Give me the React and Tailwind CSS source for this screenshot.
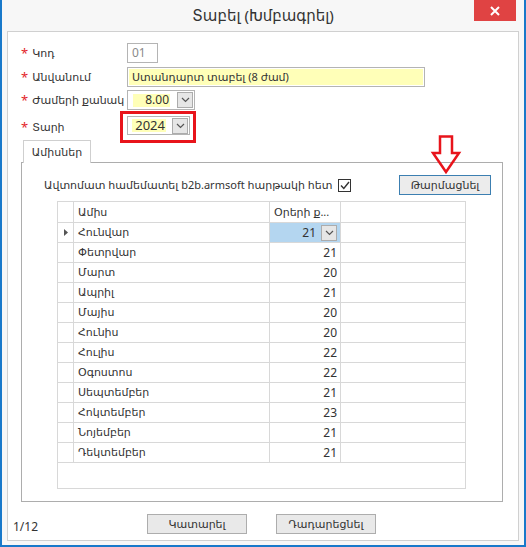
import React from "react";

const months = [
    ["Հունվար", 21],
    ["Փետրվար", 21],
    ["Մարտ", 20],
    ["Ապրիլ", 21],
    ["Մայիս", 20],
    ["Հունիս", 20],
    ["Հուլիս", 22],
    ["Օգոստոս", 22],
    ["Սեպտեմբեր", 21],
    ["Հոկտեմբեր", 23],
    ["Նոյեմբեր", 21],
    ["Դեկտեմբեր", 21],
];

function Chevron() {
    return (
        <svg width="9" height="6" viewBox="0 0 9 6">
            <path d="M1 1 L4.5 4.5 L8 1" fill="none" stroke="#555" strokeWidth="1.2" />
        </svg>
    );
}

function DropBtn() {
    return (
        <div className="flex h-[16px] w-[16px] items-center justify-center border border-[#acacac] bg-[#e6e6e6]">
            <Chevron />
        </div>
    );
}

function Label({ text, w = "w-[106px]" }) {
    return (
        <div className={`${w} flex shrink-0 items-center gap-[4px] whitespace-nowrap`}>
            <span className="text-[13px] leading-none text-[#e3262a]">*</span>
            <span>{text}</span>
        </div>
    );
}

export default function App() {
    return (
        <div className="flex h-[547px] w-[526px] flex-col border-x-2 border-b-2 border-[#1979ca] bg-[#f7f7f7] font-['Noto_Sans','DejaVu_Sans',sans-serif] text-[11px] text-[#333]">
            {/* title bar */}
            <div className="relative flex h-[31px] shrink-0 items-center justify-center">
                <span className="text-[15px] text-[#333]">Տաբել (Խմբագրել)</span>
                <div className="absolute right-[8px] top-0 flex h-[21px] w-[42px] items-center justify-center bg-[#e04343]">
                    <svg width="10" height="10" viewBox="0 0 10 10">
                        <path d="M1 1 L9 9 M9 1 L1 9" stroke="#fff" strokeWidth="2" />
                    </svg>
                </div>
            </div>

            {/* main panel */}
            <div className="relative ml-[5px] flex h-[510px] w-[512px] flex-col border border-[#d0d0d0] bg-white">
                <div className="flex flex-col pl-[13px] pt-[11px]">
                    <div className="flex h-[20px] items-center">
                        <Label text="Կոդ" />
                        <div className="flex h-[20px] w-[31px] items-center border border-[#b4b4b4] pl-[4px] text-[12px] text-[#8a8a8a]">
                            01
                        </div>
                    </div>
                    <div className="mt-[4px] flex h-[20px] items-center">
                        <Label text="Անվանում" />
                        <div className="flex h-[20px] w-[298px] items-center border border-[#b4b4b4] p-px">
                            <div className="flex h-full w-full items-center bg-[#ffffb8] pl-[3px]">
                                Ստանդարտ տաբել (8 ժամ)
                            </div>
                        </div>
                    </div>
                    <div className="mt-[3px] flex h-[20px] items-center">
                        <Label text="Ժամերի քանակ" />
                        <div className="flex h-[20px] w-[68px] items-center border border-[#b4b4b4] pl-[5px] pr-px">
                            <div className="flex h-[13px] w-[37px] items-center justify-end bg-[#ffffb8] pr-[1px] text-[12px]">
                                8.00
                            </div>
                            <div className="ml-auto">
                                <DropBtn />
                            </div>
                        </div>
                    </div>
                    <div className="mt-[1px] flex h-[32px] items-center">
                        <Label text="Տարի" w="w-[99px]" />
                        <div className="h-[32px] w-[76px] border-[3px] border-[#e8141b] pl-[4px] pt-[2px]">
                            <div className="flex h-[19px] w-[63px] items-center border border-[#b4b4b4] pl-[4px] pr-px">
                                <div className="flex h-[13px] w-[34px] items-center justify-end bg-[#ffffb8] pr-[1px] text-[13px]">
                                    2024
                                </div>
                                <div className="ml-auto">
                                    <DropBtn />
                                </div>
                            </div>
                        </div>
                    </div>
                </div>

                {/* tab */}
                <div className="relative ml-[13px] mt-[-3px] w-[482px]">
                    <div className="relative z-10 -mb-px ml-[2px] flex h-[23px] w-[68px] items-center justify-center border-x border-t border-[#cfcfcf] bg-white">
                        Ամիսներ
                    </div>
                    <div className="flex h-[340px] flex-col border border-[#adadad] bg-white">
                        <div className="mt-[12px] flex h-[20px] items-center pl-[22px] pr-[11px]">
                            <span>Ավտոմատ համեմատել b2b.armsoft հարթակի հետ</span>
                            <div className="ml-[6px] flex h-[13px] w-[13px] items-center justify-center border border-[#333]">
                                <svg width="10" height="9" viewBox="0 0 10 9">
                                    <path d="M1 4.5 L3.8 7.5 L9 1" fill="none" stroke="#333" strokeWidth="1.4" />
                                </svg>
                            </div>
                            <button className="ml-auto flex h-[20px] w-[92px] items-center justify-center border border-[#3c7fb1] bg-[#ececec]">
                                Թարմացնել
                            </button>
                        </div>

                        {/* grid */}
                        <div className="ml-[35px] mt-[6px] flex h-[288px] w-[409px] flex-col border border-[#d8d8d8]">
                            <div className="flex h-[21px] border-b border-[#d8d8d8]">
                                <div className="w-[16px] border-r border-[#d8d8d8]" />
                                <div className="flex w-[196px] items-center border-r border-[#d8d8d8] pl-[4px]">Ամիս</div>
                                <div className="flex w-[71px] items-center border-r border-[#d8d8d8] pl-[4px]">Օրերի ք...</div>
                                <div className="flex-1" />
                            </div>
                            {months.map(([m, d], i) => (
                                <div key={m} className="flex h-[20px] border-b border-[#d8d8d8]">
                                    <div className="flex w-[16px] items-center justify-center border-r border-[#d8d8d8]">
                                        {i === 0 && (
                                            <svg width="4" height="7" viewBox="0 0 4 7">
                                                <path d="M0 0 L4 3.5 L0 7 Z" fill="#555" />
                                            </svg>
                                        )}
                                    </div>
                                    <div className="flex w-[196px] items-center border-r border-[#d8d8d8] pl-[4px]">{m}</div>
                                    {i === 0 ? (
                                        <div className="flex w-[71px] items-center justify-end gap-[5px] border-r border-[#d8d8d8] bg-[#b4d6f0] pr-[3px] text-[12px]">
                                            <span>{d}</span>
                                            <DropBtn />
                                        </div>
                                    ) : (
                                        <div className="flex w-[71px] items-center justify-end border-r border-[#d8d8d8] pr-[3px] text-[12px]">
                                            {d}
                                        </div>
                                    )}
                                    <div className="flex-1" />
                                </div>
                            ))}
                            <div className="flex-1" />
                        </div>
                    </div>
                </div>

                {/* footer */}
                <div className="mt-[12px] flex h-[20px] items-center pl-[5px]">
                    <span className="mt-[5px] w-[134px] text-[12px]">1/12</span>
                    <button className="flex h-[20px] w-[100px] items-center justify-center border border-[#adadad] bg-[#e9e9e9]">
                        Կատարել
                    </button>
                    <button className="ml-[29px] flex h-[20px] w-[100px] items-center justify-center border border-[#adadad] bg-[#e9e9e9]">
                        Դադարեցնել
                    </button>
                </div>

                {/* red annotation arrow */}
                <svg className="absolute left-[422px] top-[103px]" width="32" height="40" viewBox="0 0 32 40">
                    <path d="M10 1.5 L22 1.5 L22 18 L29 18 L16 37 L3 18 L10 18 Z" fill="none" stroke="#e8141b" strokeWidth="2.5" strokeLinejoin="miter" />
                </svg>
            </div>
        </div>
    );
}
